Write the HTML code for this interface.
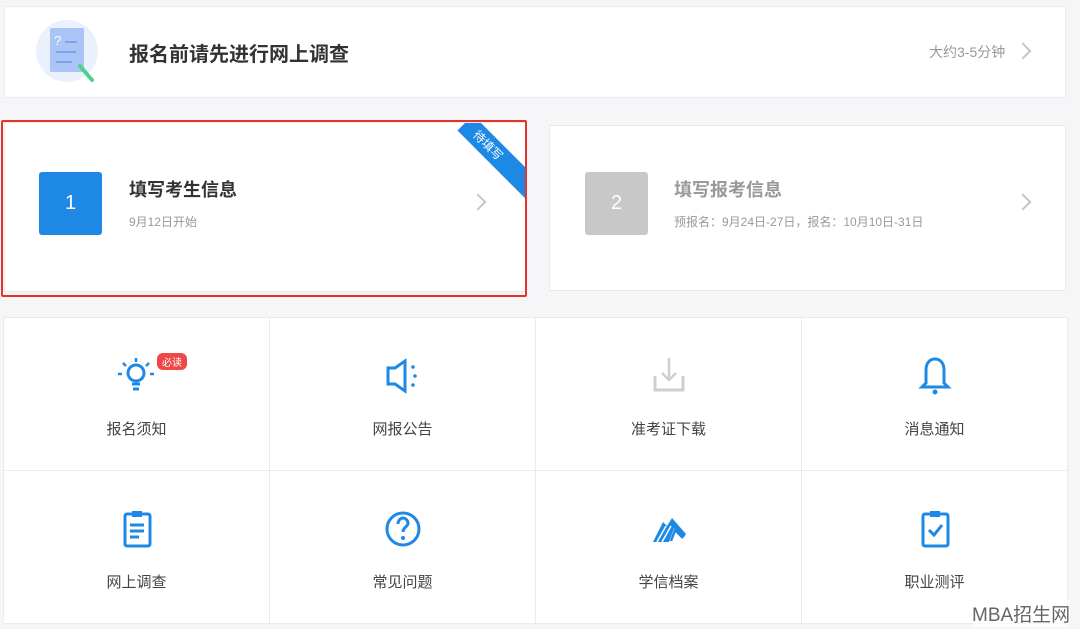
<!DOCTYPE html><html><head><meta charset="utf-8"><style>
body{margin:0;width:1080px;height:629px;background:#f6f6f8;font-family:"Liberation Sans","Noto Sans CJK SC",sans-serif;position:relative;overflow:hidden}
.a{position:absolute}
.card{position:absolute;background:#fff;border:1px solid #ebebee}
.chev{position:absolute;width:10px;height:10px;border-top:2px solid #c6c6c6;border-right:2px solid #c6c6c6;transform:rotate(45deg)}
.cell{position:absolute;width:265px;height:152px;background:#fff;border-right:1px solid #ebebee;border-bottom:1px solid #ebebee;text-align:center}
.cell .l{position:absolute;left:0;right:0;top:100px;font-size:15px;color:#444}
.cell svg{position:absolute;left:113px;top:38px}
</style></head><body>
<div class="card" style="left:4px;top:6px;width:1060px;height:90px"></div>
<div class="a" style="left:36px;top:20px;width:62px;height:62px;border-radius:50%;background:#eaf1fd"></div>
<svg class="a" style="left:36px;top:20px" width="64" height="64"><rect x="14" y="8" width="34" height="44" rx="2" fill="#a9c4f5"/><text x="18" y="25" font-size="13" fill="#fff" font-family="Liberation Sans">?</text><path d="M29 22h12M20 32h20M20 42h16" stroke="#7da3ee" stroke-width="2"/><path d="M44 46l12 14" stroke="#4fd08f" stroke-width="4" stroke-linecap="round"/></svg>
<div class="a" style="left:129px;top:38px;font-size:20px;font-weight:bold;color:#333">报名前请先进行网上调查</div>
<div class="a" style="left:929px;top:42px;font-size:14px;color:#999">大约3-5分钟</div>
<div class="chev" style="left:1017px;top:45px"></div>

<div class="card" style="left:4px;top:122px;width:520px;height:168px;overflow:hidden">
<div class="a" style="left:446px;top:22px;width:140px;height:22px;background:#1e88e5;transform:rotate(45deg);transform-origin:0 0;color:#fff;font-size:12px;line-height:22px;text-indent:14px;left:468px;top:-8px">待填写</div></div>
<div class="a" style="left:1px;top:120px;width:522px;height:173px;border:2px solid #e3332c;border-radius:2px"></div>
<div class="a" style="left:39px;top:172px;width:63px;height:63px;background:#1e88e5;border-radius:3px;color:#fff;font-size:20px;text-align:center;line-height:63px">1</div>
<div class="a" style="left:129px;top:176px;font-size:18px;font-weight:bold;color:#333">填写考生信息</div>
<div class="a" style="left:129px;top:213px;font-size:12px;color:#999">9月12日开始</div>
<div class="chev" style="left:472px;top:196px"></div>

<div class="card" style="left:549px;top:125px;width:515px;height:164px"></div>
<div class="a" style="left:585px;top:172px;width:63px;height:63px;background:#c8c8c8;border-radius:3px;color:#fff;font-size:20px;text-align:center;line-height:63px">2</div>
<div class="a" style="left:674px;top:176px;font-size:18px;font-weight:bold;color:#999">填写报考信息</div>
<div class="a" style="left:674px;top:213px;font-size:12px;color:#999">预报名：9月24日-27日，报名：10月10日-31日</div>
<div class="chev" style="left:1017px;top:196px"></div>

<div class="a" style="left:3px;top:317px;width:1063px;height:305px;border-top:1px solid #ebebee;border-left:1px solid #ebebee"></div>
<div class="cell" style="left:4px;top:318px"><svg width="40" height="40"><g fill="none" stroke="#1e88e5" stroke-width="3"><circle cx="19" cy="17" r="8"/><path d="M15 28h8M16 33h6"/></g><g stroke="#1e88e5" stroke-width="2.5"><path d="M19 2v4M6 7l3 3M32 7l-3 3M1 18h4M33 18h4"/></g></svg><div class="a" style="left:153px;top:35px;background:#f04848;color:#fff;font-size:10px;border-radius:6px;padding:1px 5px">必读</div><div class="l">报名须知</div></div>
<div class="cell" style="left:270px;top:318px"><svg width="40" height="40"><path d="M5 12h7l10-7v30l-10-7H5z" fill="none" stroke="#1e88e5" stroke-width="3"/><g fill="#1e88e5"><circle cx="30" cy="11" r="1.8"/><circle cx="32" cy="20" r="1.8"/><circle cx="30" cy="29" r="1.8"/></g></svg><div class="l">网报公告</div></div>
<div class="cell" style="left:536px;top:318px"><svg width="40" height="40"><path d="M6 20v14h28V20" fill="none" stroke="#cfcfcf" stroke-width="3"/><path d="M20 2v22M13 17l7 7 7-7" fill="none" stroke="#cfcfcf" stroke-width="2.5"/></svg><div class="l">准考证下载</div></div>
<div class="cell" style="left:802px;top:318px"><svg width="40" height="40"><path d="M20 3c-6 0-9 5-9 11v13l-4 4h26l-4-4V14c0-6-3-11-9-11z" fill="none" stroke="#1e88e5" stroke-width="3"/><circle cx="20" cy="36" r="2.5" fill="#1e88e5"/></svg><div class="l">消息通知</div></div>
<div class="cell" style="left:4px;top:471px"><svg width="40" height="40"><rect x="8" y="5" width="25" height="32" rx="2" fill="none" stroke="#1e88e5" stroke-width="3"/><rect x="15" y="2" width="10" height="6" fill="#1e88e5"/><path d="M13 16h14M13 22h14M13 28h9" stroke="#1e88e5" stroke-width="3"/></svg><div class="l">网上调查</div></div>
<div class="cell" style="left:270px;top:471px"><svg width="40" height="40"><circle cx="20" cy="20" r="16" fill="none" stroke="#1e88e5" stroke-width="3"/><path d="M15 15c0-4 3-6 5-6s5 2 5 5c0 4-5 4-5 9" fill="none" stroke="#1e88e5" stroke-width="3"/><circle cx="20" cy="29" r="2" fill="#1e88e5"/></svg><div class="l">常见问题</div></div>
<div class="cell" style="left:536px;top:471px"><svg width="40" height="40"><path d="M4 33l10-20 4 4 5-8 14 16-5 8z" fill="#1e88e5"/><path d="M8 33l9-16M13 33l9-16" stroke="#fff" stroke-width="1.5"/><path d="M20 33l5-14 10 10-3 4z" fill="#fff"/><path d="M22 32l4-11 8 8" fill="none" stroke="#1e88e5" stroke-width="2.5"/></svg><div class="l">学信档案</div></div>
<div class="cell" style="left:802px;top:471px"><svg width="40" height="40"><rect x="8" y="5" width="25" height="32" rx="2" fill="none" stroke="#1e88e5" stroke-width="3"/><rect x="15" y="2" width="10" height="6" fill="#1e88e5"/><path d="M14 21l5 5 8-10" fill="none" stroke="#1e88e5" stroke-width="3"/></svg><div class="l">职业测评</div></div>
<div class="a" style="left:972px;top:600px;font-size:19px;color:#666;background:rgba(255,255,255,.6)">MBA招生网</div>
</body></html>
